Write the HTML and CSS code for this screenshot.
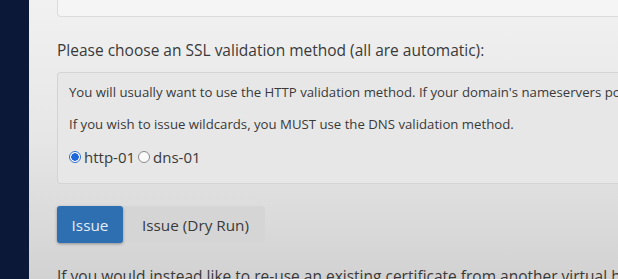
FILE: index.html
```html
<!DOCTYPE html>
<html>
<head>
  <title>SSL certificate</title>
  <meta charset="utf-8">
  <link rel="stylesheet" href="styles.css">
</head>
<body>
  <div class="sidebar"></div>
  <div class="main">
    <div class="topbox"></div>

    <p class="heading">Please choose an SSL validation method (all are automatic):</p>

    <div class="well">
      <p>You will usually want to use the HTTP validation method. If your domain's nameservers point to this server, you may also use the DNS validation method.</p>
      <p>If you wish to issue wildcards, you MUST use the DNS validation method.</p>
      <div class="methods">
        <label class="radio"><span class="dot on"></span>http-01</label>
        <label class="radio"><span class="dot"></span>dns-01</label>
      </div>
    </div>

    <div class="buttons">
      <button class="btn primary">Issue</button>
      <button class="btn">Issue (Dry Run)</button>
    </div>

    <p class="heading last">If you would instead like to re-use an existing certificate from another virtual host, select it below.</p>
  </div>
</body>
</html>
```

FILE: styles.css
```css
html, body {
    margin: 0;
    height: 100%;
    overflow: hidden;
}
body {
    display: flex;
    font-family: "Open Sans", "Noto Sans", sans-serif;
    color: #3a3a3a;
    background: #0b1838;
}
.sidebar {
    width: 29px;
    flex: none;
    background: #0b1838;
}
.main {
    flex: 1;
    min-width: 0;
    padding: 0 0 0 28px;
    background: linear-gradient(#f1f1f1, #e6e6e6 50%, #d2d2d2);
    white-space: nowrap;
    overflow: hidden;
}
.topbox {
    height: 16px;
    border: 1px solid #dcdcdc;
    border-top: none;
    border-right: none;
    border-radius: 0 0 0 4px;
    background: #f5f5f5;
}
.heading {
    margin: 23px 0 0;
    font-size: 15.5px;
    line-height: 20px;
}
.heading.last {
    margin-top: 23px;
}
.well {
    margin-top: 12px;
    padding: 10px 0 16px 11px;
    border: 1px solid #d4d4d4;
    border-right: none;
    border-radius: 4px 0 0 4px;
    background: #e7e7e7;
}
.well p {
    margin: 0 0 14px;
    font-size: 13.2px;
    line-height: 18px;
}
.methods {
    display: flex;
    align-items: center;
    font-size: 15px;
    line-height: 20px;
}
.radio {
    display: flex;
    align-items: center;
    gap: 3px;
    margin-right: 3px;
}
.dot {
    width: 12px;
    height: 12px;
    border: 1px solid #8a8a8a;
    border-radius: 50%;
    background: #fafafa;
    box-sizing: border-box;
}
.dot.on {
    border-color: #2f6fcf;
    background: radial-gradient(circle, #1f66d8 0 3.5px, #fff 4px);
}
.buttons {
    display: flex;
    margin-top: 22px;
}
.btn {
    height: 37px;
    padding: 0 16px 0 19px;
    border: none;
    border-radius: 0 3px 3px 0;
    background: #d5d5d5;
    color: #3a3a3a;
    font-family: inherit;
    font-size: 15.3px;
}
.btn.primary {
    width: 66px;
    padding: 0;
    border-radius: 3px;
    background: #2e6fb2;
    color: #e4edf6;
    box-shadow: 0 1px 3px rgba(0, 0, 0, 0.35);
    position: relative;
}
```
